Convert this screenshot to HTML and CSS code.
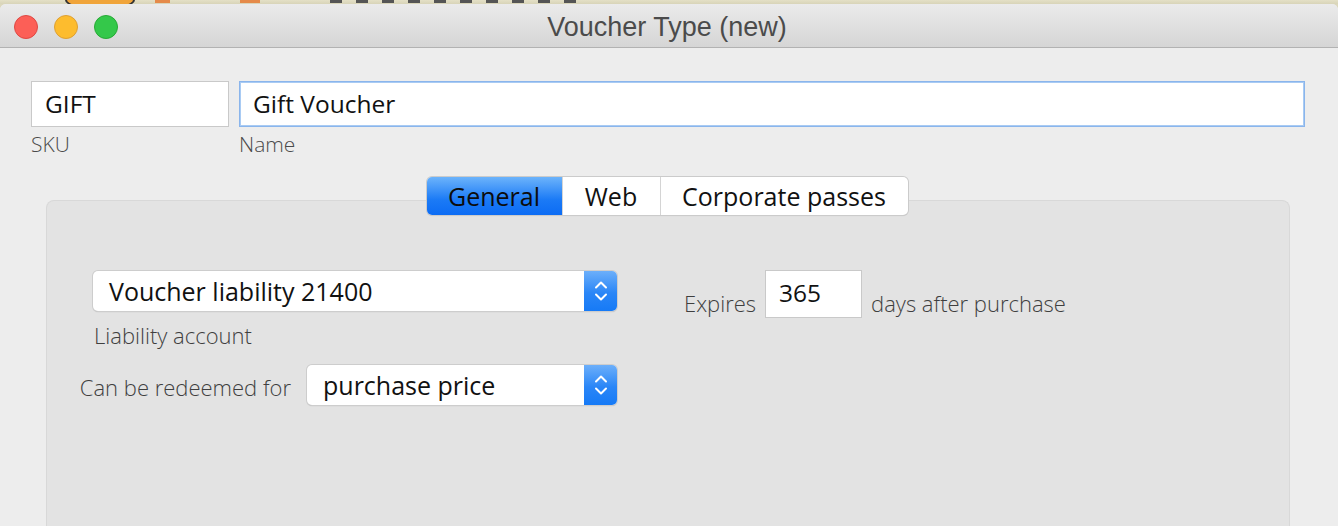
FILE: index.html
```html
<!DOCTYPE html>
<html>
<head>
<meta charset="utf-8">
<link rel="stylesheet" href="styles.css">
</head>
<body>
<div class="desk">
  <div class="logo-bits"><span class="orb"></span><span class="dash d1"></span><span class="dash d2"></span><span class="dash d3"></span></div>
</div>
<div class="window">
  <div class="titlebar">
    <div class="lights">
      <span class="light red"></span>
      <span class="light yellow"></span>
      <span class="light green"></span>
    </div>
    <div class="title">Voucher Type (new)</div>
  </div>
  <div class="content">
    <div class="fields">
      <div class="field sku-field">
        <div class="input">GIFT</div>
        <div class="caption">SKU</div>
      </div>
      <div class="field name-field">
        <div class="input focused">Gift Voucher</div>
        <div class="caption">Name</div>
      </div>
    </div>
    <div class="tabs">
      <div class="seg">
        <span class="tab active">General</span>
        <span class="tab">Web</span>
        <span class="tab">Corporate passes</span>
      </div>
    </div>
    <div class="panel">
      <div class="panel-row">
        <div class="left-col">
          <div class="select wide">
            <span class="sel-text">Voucher liability 21400</span>
            <span class="sel-btn"><svg width="16" height="24" viewBox="0 0 16 24"><path d="M3 8.5 L8 3.5 L13 8.5 M3 15.5 L8 20.5 L13 15.5" fill="none" stroke="#fff" stroke-width="2" stroke-linecap="round" stroke-linejoin="round"/></svg></span>
          </div>
          <div class="sub-label">Liability account</div>
          <div class="redeem-row">
            <span class="inline-label">Can be redeemed for</span>
            <div class="select narrow">
              <span class="sel-text">purchase price</span>
              <span class="sel-btn"><svg width="16" height="24" viewBox="0 0 16 24"><path d="M3 8.5 L8 3.5 L13 8.5 M3 15.5 L8 20.5 L13 15.5" fill="none" stroke="#fff" stroke-width="2" stroke-linecap="round" stroke-linejoin="round"/></svg></span>
            </div>
          </div>
        </div>
        <div class="right-col">
          <span class="inline-label">Expires</span>
          <div class="input days">365</div>
          <span class="inline-label">days after purchase</span>
        </div>
      </div>
    </div>
  </div>
</div>
</body>
</html>
```
FILE: styles.css
```css
* { box-sizing: border-box; }
html, body { margin: 0; padding: 0; height: 526px; overflow: hidden; }
body {
  background: #dcd8bd;
  font-family: "Open Sans", "Noto Sans", sans-serif;
}
.desk {
  height: 4px;
  position: relative;
  overflow: hidden;
  background: linear-gradient(#e4e0c6, #d8d4b8);
}
.logo-bits { position: absolute; left: 0; top: 0; width: 100%; height: 4px; }
.orb { position: absolute; left: 65px; top: -10px; width: 70px; height: 20px; border-radius: 50%; background: #f0a43a; border: 2px solid #333; }
.dash { position: absolute; top: 0; height: 3px; background: #e58a4a; }
.d1 { left: 155px; width: 15px; }
.d2 { left: 240px; width: 20px; }
.d3 { left: 330px; width: 260px; background: repeating-linear-gradient(90deg, #555 0 12px, transparent 12px 26px); }

.window {
  background: #ededed;
  border-radius: 6px 6px 0 0;
  overflow: hidden;
  height: 522px;
}
.titlebar {
  height: 44px;
  background: linear-gradient(#ebebeb, #d5d5d5);
  border-bottom: 1px solid #b2b2b2;
  display: flex;
  align-items: center;
  position: relative;
}
.lights { display: flex; gap: 16px; padding-left: 14px; padding-top: 2px; }
.light { width: 24px; height: 24px; border-radius: 50%; display: block; }
.red { background: #fc5f57; border: 1px solid #df4843; }
.yellow { background: #fdbc2e; border: 1px solid #dea033; }
.green { background: #34c84a; border: 1px solid #27aa35; }
.title {
  position: absolute;
  left: 0; right: 0; top: 0; bottom: 0;
  display: flex; align-items: center; justify-content: center;
  font-family: "Liberation Sans", Arial, sans-serif;
  font-size: 27px;
  color: #4b4b4b;
  padding-top: 3px;
  padding-right: 4px;
  pointer-events: none;
}

.content { padding: 33px 33px 0 31px; }
.fields { display: flex; gap: 10px; }
.sku-field { width: 198px; flex: none; }
.name-field { flex: 1; }
.input {
  height: 46px;
  background: #fff;
  border: 1px solid #c9c9c9;
  font-size: 24.5px;
  color: #111;
  padding-left: 13px;
  display: flex;
  align-items: center;
  line-height: 1;
}
.input.focused { border: 1px solid #8ab5ec; box-shadow: 0 0 0 1px #a9cbf3 inset; }
.caption {
  font-size: 21px;
  font-weight: 300;
  color: #4a4a4a;
  margin-top: 4px;
  line-height: 26px;
}

.tabs {
  display: flex;
  justify-content: center;
  margin-top: 20px;
  position: relative;
  z-index: 2;
  padding-right: 2px;
}
.seg {
  display: flex;
  height: 38px;
  border-radius: 5px;
  box-shadow: 0 0 0 1px #cbcbcb, 0 1px 1px rgba(0,0,0,0.12);
  background: #fff;
  overflow: hidden;
}
.tab {
  display: flex; align-items: center; justify-content: center;
  font-size: 25px;
  color: #111;
  border-left: 1px solid #d4d4d4;
}
.tab:first-child { border-left: none; }
.tab.active {
  background: linear-gradient(#6cb3fb, #1b7af6 60%, #0c6cf4);
  color: #0c0c0c;
  width: 135px;
}
.tab:nth-child(2) { width: 98px; }
.tab:nth-child(3) { width: 248px; }

.panel {
  margin: -15px 15px 0 15px;
  background: #e3e3e3;
  border: 1px solid #d8d8d8;
  border-bottom: none;
  border-radius: 8px 8px 0 0;
  height: 340px;
  padding: 70px 0 0 46px;
}
.panel-row { display: flex; align-items: flex-start; }
.left-col { width: 524px; flex: none; }
.select {
  height: 40px;
  background: #fff;
  border-radius: 5px;
  box-shadow: 0 0 0 1px #cdcdcd, 0 1px 1px rgba(0,0,0,0.25);
  display: flex;
  align-items: center;
  overflow: hidden;
}
.sel-text { flex: 1; font-size: 25px; color: #111; padding-left: 16px; }
.sel-btn {
  width: 33px; height: 40px;
  background: linear-gradient(#6caffa, #2a86f7 55%, #167af6);
  display: flex; align-items: center; justify-content: center;
}
.sub-label {
  font-size: 22px;
  font-weight: 300;
  color: #3f3f3f;
  line-height: 26px;
  margin-top: 11px;
  padding-left: 1px;
}
.redeem-row {
  display: flex;
  justify-content: flex-end;
  align-items: center;
  margin-top: 17px;
}
.inline-label {
  font-size: 22px;
  font-weight: 300;
  color: #3f3f3f;
  white-space: nowrap;
}
.redeem-row .inline-label { margin-right: 16px; padding-top: 4px; }
.select.narrow { width: 310px; flex: none; }
.right-col {
  margin-left: 67px;
  display: flex;
  align-items: center;
  margin-top: -1px;
}
.right-col .inline-label { padding-top: 18px; }
.input.days {
  width: 97px; height: 48px;
  margin: 0 9px 0 9px;
  padding-left: 13px;
  padding-bottom: 2px;
}
```
